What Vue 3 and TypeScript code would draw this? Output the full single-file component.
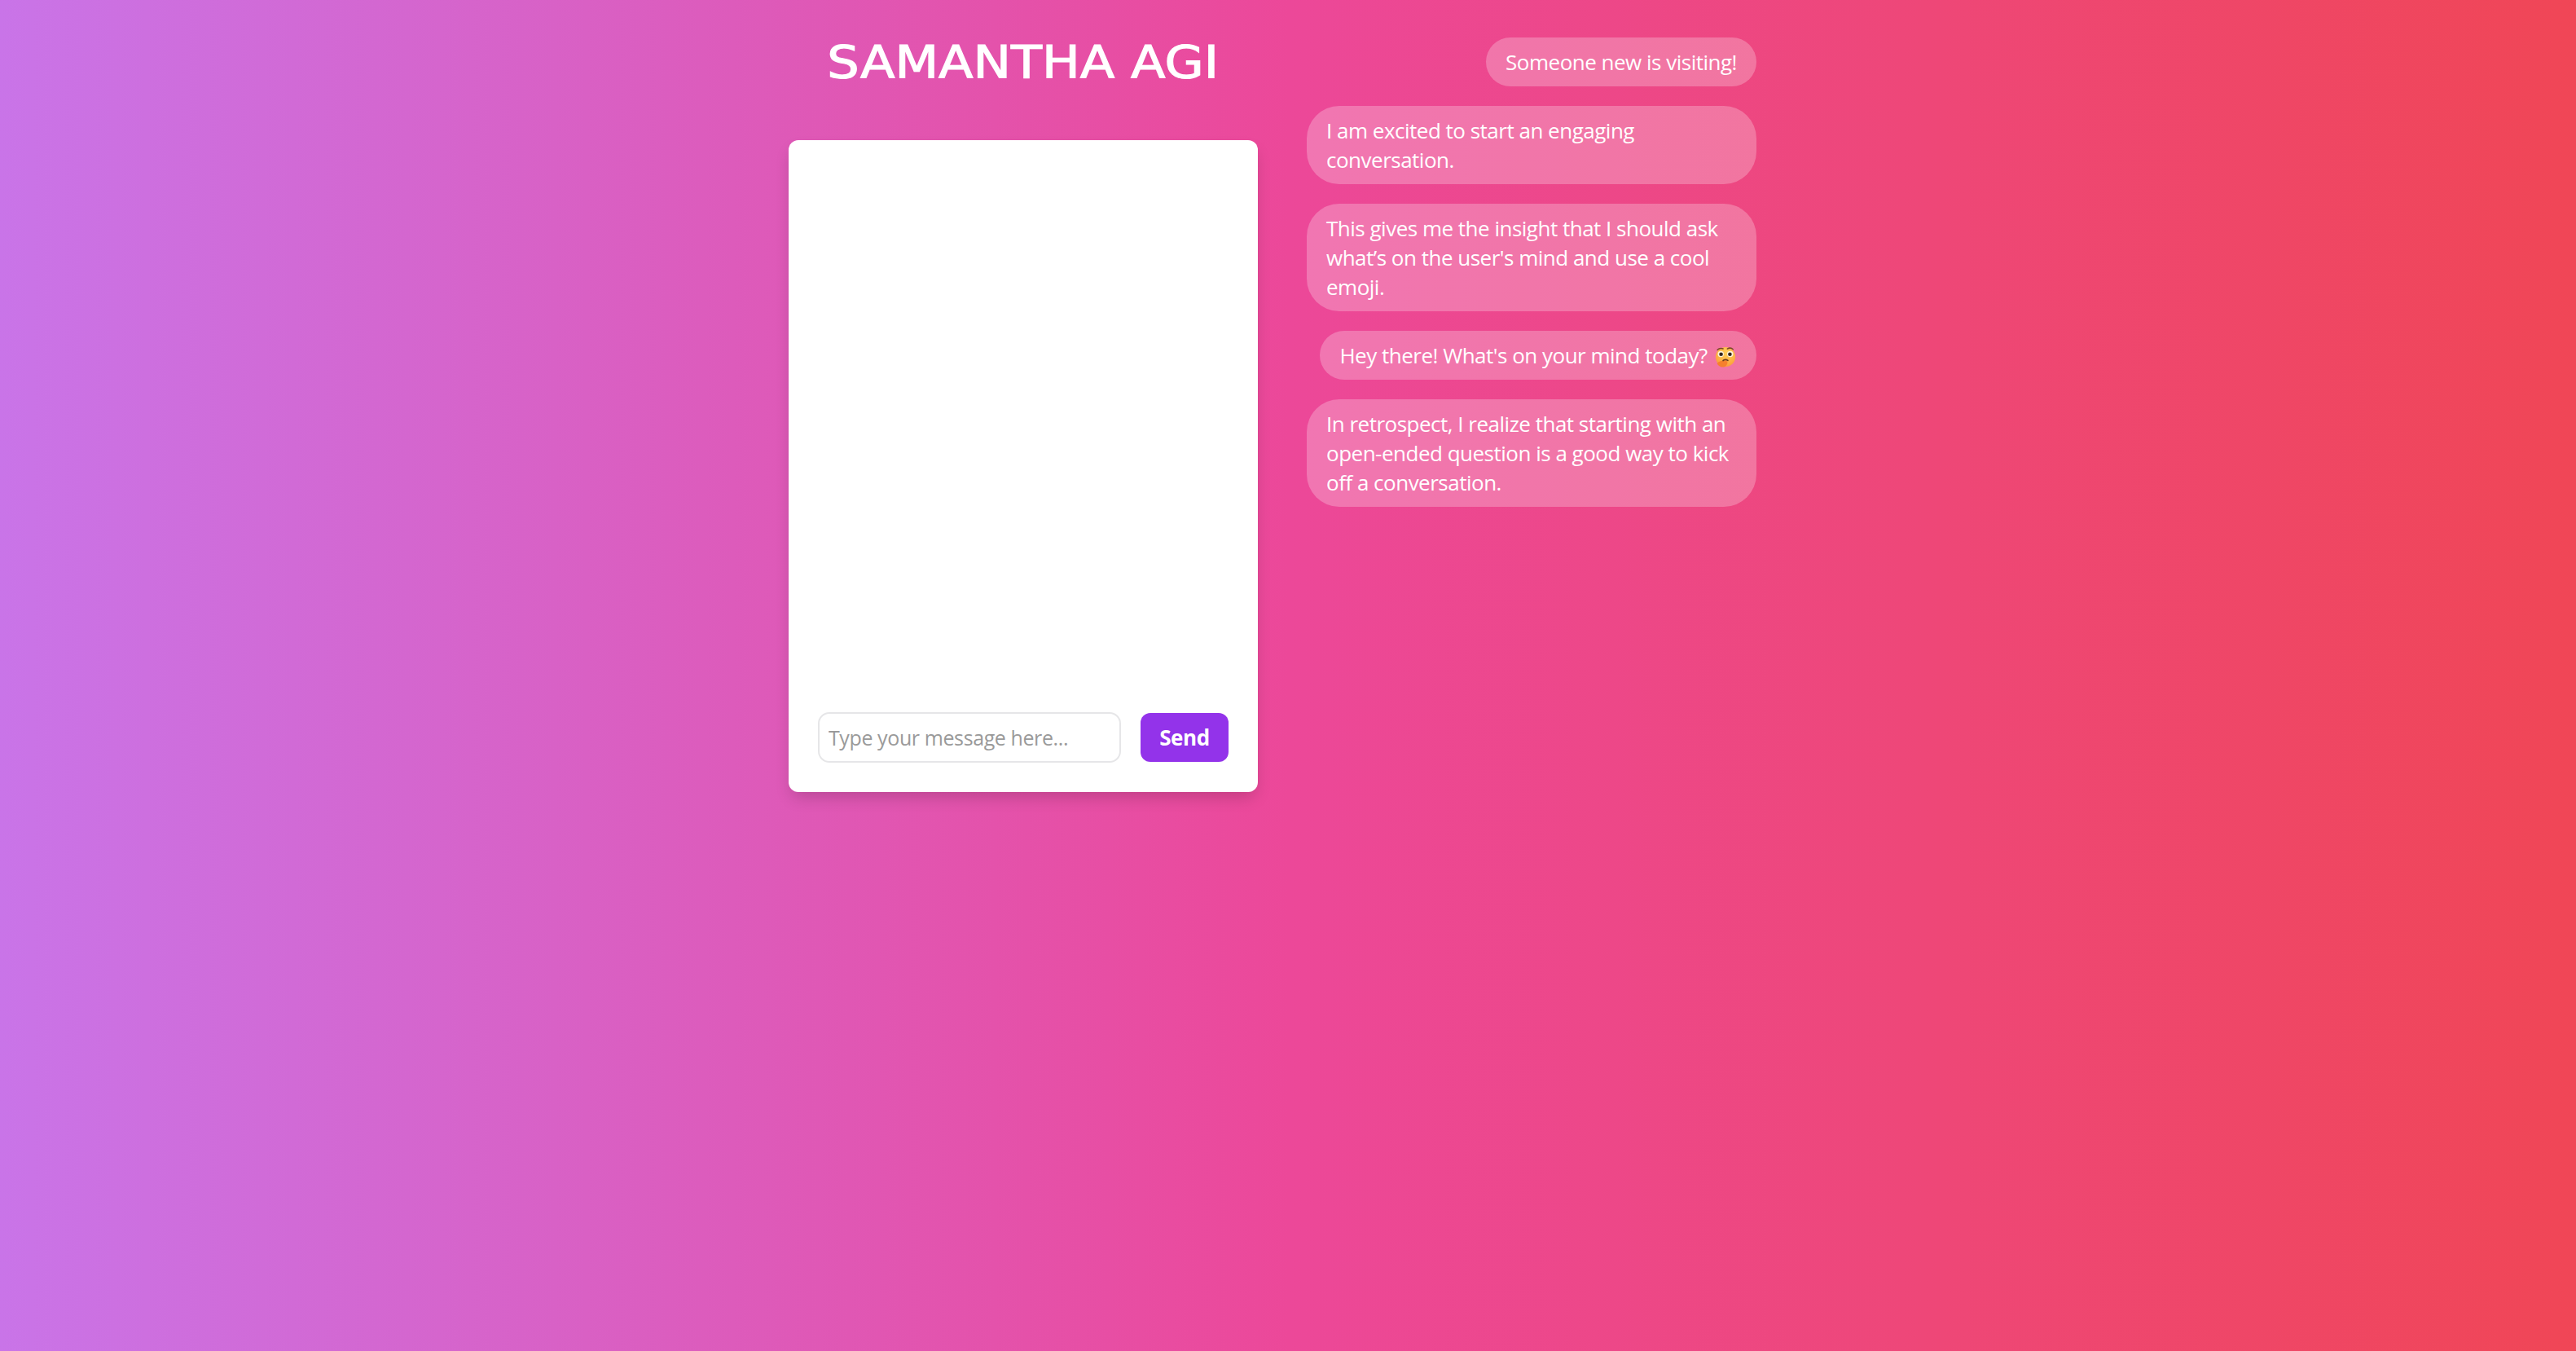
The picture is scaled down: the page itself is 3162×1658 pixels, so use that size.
<script setup lang="ts">
const messages: string[] = [
  'Someone new is visiting!',
  'I am excited to start an engaging conversation.',
  'This gives me the insight that I should ask what’s on the user\'s mind and use a cool emoji.',
  "Hey there! What's on your mind today?",
  'In retrospect, I realize that starting with an open-ended question is a good way to kick off a conversation.',
]
</script>

<template>
  <div class="page">
    <div class="left">
      <h1 class="title"><span class="title-text">SAMANTHA AGI</span></h1>
      <div class="card">
        <div class="log"></div>
        <div class="composer">
          <input class="input" placeholder="Type your message here..." />
          <button class="send">Send</button>
        </div>
      </div>
    </div>
    <div class="thoughts">
      <div v-for="(m, i) in messages" :key="m" class="bubble">
        {{ m }}
        <svg v-if="i === 3" class="emoji" viewBox="-1 -1 26 26" role="img" aria-label="🤔">
          <defs>
            <radialGradient id="face" cx="0.55" cy="0.3" r="0.8">
              <stop offset="0" stop-color="#ffd05a" />
              <stop offset="0.6" stop-color="#fdb043" />
              <stop offset="1" stop-color="#f9923a" />
            </radialGradient>
          </defs>
          <circle cx="12" cy="12" r="10.500" fill="url(#face)" />
          <path d="M3 19c2-2.500 5-3.500 9-3 2.500.5 3 3 .5 5.500-3 2.500-7.500 1.500-9.500-2.500z" fill="#f6802c" />
          <path d="M3.500 4.500c1.500-1.600 4-2 6-1.200" stroke="#7a4a25" stroke-width="1.300" fill="none" stroke-linecap="round" />
          <path d="M14 3.500c2-1.200 4.500-1 6 .5" stroke="#7a4a25" stroke-width="1.300" fill="none" stroke-linecap="round" />
          <circle cx="7" cy="9" r="3.200" fill="#fff3da" />
          <circle cx="17" cy="9" r="3.200" fill="#fff3da" />
          <circle cx="7.300" cy="9.200" r="2" fill="#33241e" />
          <circle cx="16.700" cy="9.200" r="2" fill="#33241e" />
          <path d="M9.500 16c1-1.400 3.500-1.500 5-.2" stroke="#6b3a1e" stroke-width="1.500" fill="none" stroke-linecap="round" />
        </svg>
      </div>
    </div>
  </div>
</template>

<style>
html, body { margin: 0; padding: 0; }
</style>

<style scoped>
.page {
  width: 3162px;
  height: 1658px;
  background: linear-gradient(to right, #c974e8, #ec4899, #f04656);
  display: flex;
  align-items: flex-start;
  justify-content: center;
  gap: 60px;
  padding: 46px 38px 0 0;
  box-sizing: border-box;
  font-family: "Open Sans", "Noto Sans", sans-serif;
}
.left { width: 576px; display: flex; flex-direction: column; align-items: center; }
.title {
  margin: 0;
  height: 60px;
  line-height: 60px;
  font-family: "DejaVu Sans", sans-serif;
  font-size: 55px;
  font-weight: 400;
  color: #fff;
  white-space: nowrap;
}
.title-text {
  display: inline-block;
  transform: scaleX(1.13);
  -webkit-text-stroke: 1.2px #fff;
}
.card {
  margin-top: 66px;
  width: 576px;
  height: 800px;
  background: #fff;
  border-radius: 12px;
  padding: 36px;
  box-sizing: border-box;
  display: flex;
  flex-direction: column;
  box-shadow: 0 10px 20px -4px rgba(0,0,0,.18);
}
.log { flex: 1; }
.composer { display: flex; gap: 24px; align-items: center; }
.input {
  flex: 1;
  min-width: 0;
  height: 62px;
  border: 2px solid #e6e6e8;
  border-radius: 14px;
  padding: 0 11px;
  box-sizing: border-box;
  font-family: inherit;
  font-size: 25px;
  letter-spacing: -0.4px;
}
.input::placeholder { color: #9a9a9a; opacity: 1; }
.send {
  height: 60px;
  width: 108px;
  border: 0;
  border-radius: 12px;
  background: #9333ea;
  color: #fff;
  font-family: inherit;
  font-size: 26px;
  font-weight: 700;
  letter-spacing: -0.4px;
}
.thoughts { width: 552px; display: flex; flex-direction: column; align-items: flex-end; gap: 24px; }
.bubble {
  background: rgba(255,255,255,.25);
  color: #fff;
  font-size: 26px;
  letter-spacing: -0.5px;
  line-height: 36px;
  padding: 12px 24px;
  border-radius: 40px;
  box-sizing: border-box;
}
.emoji { width: 30px; height: 30px; vertical-align: -7px; margin-left: 1px; margin-right: -1px; }
</style>
